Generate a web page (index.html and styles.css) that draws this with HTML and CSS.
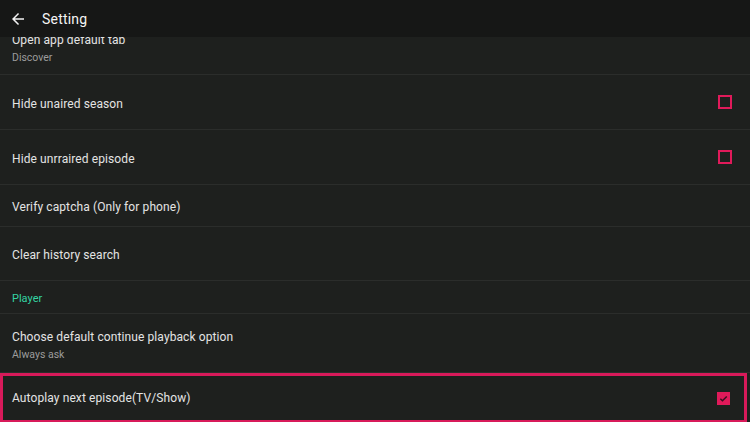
FILE: index.html
```html
<!DOCTYPE html>
<html lang="en">
<head>
  <meta charset="UTF-8">
  <meta name="viewport" content="width=device-width, initial-scale=1.0">
  <title>Setting</title>
  <link rel="stylesheet" href="styles.css">
</head>
<body>
  <div class="screen">
    <header class="topbar">
      <svg class="back" viewBox="0 0 24 24" width="18" height="18">
        <path d="M20 11H7.83l5.59-5.59L12 4l-8 8 8 8 1.41-1.41L7.83 13H20v-2z" fill="#f2f2f2"/>
      </svg>
      <h1>Setting</h1>
    </header>

    <div class="list">
      <div class="row row-two first">
        <div class="title">Open app default tab</div>
        <div class="sub">Discover</div>
      </div>
      <div class="row h55">
        <div class="title">Hide unaired season</div>
        <span class="check"></span>
      </div>
      <div class="row h55">
        <div class="title">Hide unrraired episode</div>
        <span class="check"></span>
      </div>
      <div class="row h42">
        <div class="title">Verify captcha (Only for phone)</div>
      </div>
      <div class="row h54">
        <div class="title">Clear history search</div>
      </div>
      <div class="row section">
        <div class="section-title">Player</div>
      </div>
      <div class="row row-two">
        <div class="title">Choose default continue playback option</div>
        <div class="sub">Always ask</div>
      </div>
      <div class="row focused">
        <div class="title">Autoplay next episode(TV/Show)</div>
        <span class="check checked">
          <svg viewBox="0 0 14 14" width="13" height="13">
            <path d="M3.6 7.2l2.3 2.2 4.6-4.6" fill="none" stroke="#3a0f1f" stroke-width="1.6"/>
          </svg>
        </span>
      </div>
    </div>
  </div>
</body>
</html>
```

FILE: styles.css
```css
html, body {
    margin: 0;
    padding: 0;
}
body {
    background-color: #1e201e;
    font-family: Roboto, "Noto Sans", Arial, sans-serif;
    color: #e6e6e6;
    width: 750px;
    height: 422px;
    overflow: hidden;
}
.screen {
    display: flex;
    flex-direction: column;
    height: 422px;
}
.topbar {
    position: relative;
    z-index: 2;
    height: 37px;
    flex-shrink: 0;
    display: flex;
    align-items: center;
    gap: 15px;
    padding-left: 9px;
    background-color: #161716;
    box-sizing: border-box;
}
.back {
    display: block;
}
.topbar h1 {
    margin: 0;
    font-size: 14px;
    font-weight: 400;
    color: #f4f4f4;
    letter-spacing: 0.2px;
}
.list {
    margin-top: -20px;
    display: flex;
    flex-direction: column;
}
.row {
    display: flex;
    align-items: center;
    justify-content: space-between;
    padding: 3px 18px 0 12px;
    border-bottom: 1px solid #2b2d2b;
    box-sizing: border-box;
}
.title {
    font-size: 12px;
    line-height: 18px;
    color: #e4e4e4;
    letter-spacing: 0.1px;
}
.sub {
    font-size: 10.5px;
    line-height: 16px;
    color: #9c9c9c;
    margin-top: 1px;
}
.row-two {
    flex-direction: column;
    align-items: flex-start;
    justify-content: flex-start;
    padding-top: 14px;
    height: 59px;
}
.row-two.first {
    height: 58px;
}
.h55 { height: 55px; }
.h42 { height: 42px; }
.h54 { height: 54px; }
.section {
    height: 33px;
}
.section-title {
    font-size: 11px;
    color: #34d3a3;
}
.check {
    width: 14px;
    height: 14px;
    border: 2px solid #e01a5a;
    box-sizing: border-box;
    display: flex;
    align-items: center;
    justify-content: center;
    margin-top: -4px;
}
.check.checked {
    width: 13px;
    height: 13px;
    margin: 0 1px 0 0;
    background-color: #e01a5a;
    border: none;
}
.check svg {
    display: block;
}
.focused {
    height: 50px;
    border: 3px solid #d81a5a;
    margin-right: 3px;
    padding: 0 13px 0 9px;
}
```
